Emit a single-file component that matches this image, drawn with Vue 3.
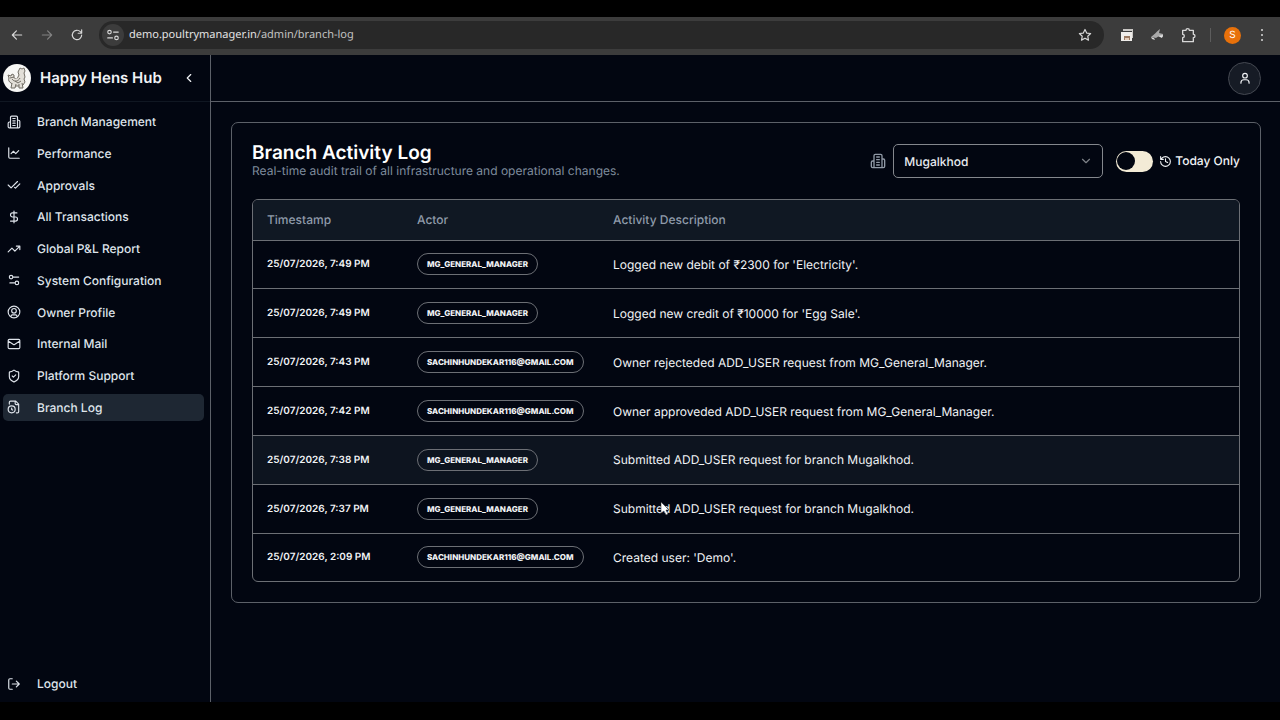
<script setup>
import { ref } from 'vue'

const nav = [
  { label: 'Branch Management', icon: 'building' },
  { label: 'Performance', icon: 'chart' },
  { label: 'Approvals', icon: 'checks' },
  { label: 'All Transactions', icon: 'dollar' },
  { label: 'Global P&L Report', icon: 'trend' },
  { label: 'System Configuration', icon: 'settings' },
  { label: 'Owner Profile', icon: 'user' },
  { label: 'Internal Mail', icon: 'mail' },
  { label: 'Platform Support', icon: 'shield' },
  { label: 'Branch Log', icon: 'log', active: true },
]

const icons = {
  building: 'M6 22V4a2 2 0 0 1 2-2h8a2 2 0 0 1 2 2v18Z M6 12H4a2 2 0 0 0-2 2v6a2 2 0 0 0 2 2h2 M18 9h2a2 2 0 0 1 2 2v9a2 2 0 0 1-2 2h-2 M10 6h4 M10 10h4 M10 14h4 M10 18h4',
  chart: 'M3 3v16a2 2 0 0 0 2 2h16 M7 13l4-4 4 4 5-5',
  checks: 'M18 6 7 17l-5-5 M22 10l-7.5 7.5L13 16',
  dollar: 'M12 2v20 M17 5H9.5a3.5 3.5 0 0 0 0 7h5a3.5 3.5 0 0 1 0 7H6',
  trend: 'M22 7l-8.5 8.5-5-5L2 17 M16 7h6v6',
  settings: 'M20 7h-9 M14 17H5 M20 17a3 3 0 1 1-6 0 3 3 0 0 1 6 0Z M10 7a3 3 0 1 1-6 0 3 3 0 0 1 6 0Z',
  user: 'M22 12a10 10 0 1 1-20 0 10 10 0 0 1 20 0Z M16 10a4 4 0 1 1-8 0 4 4 0 0 1 8 0Z M7 20.7V19a2 2 0 0 1 2-2h6a2 2 0 0 1 2 2v1.7',
  mail: 'M4 4h16a2 2 0 0 1 2 2v12a2 2 0 0 1-2 2H4a2 2 0 0 1-2-2V6a2 2 0 0 1 2-2Z M22 7l-9 5.7a2 2 0 0 1-2 0L2 7',
  shield: 'M20 13c0 5-3.5 7.5-7.7 9a1 1 0 0 1-.6 0C7.500 20.500 4 18 4 13V6a1 1 0 0 1 1-1c2 0 4.500-1.200 6.200-2.700a1.200 1.200 0 0 1 1.600 0C14.500 3.800 17 5 19 5a1 1 0 0 1 1 1Z M9 12l2 2 4-4',
  log: 'M16 22h2a2 2 0 0 0 2-2V7l-5-5H6a2 2 0 0 0-2 2v3 M14 2v4a2 2 0 0 0 2 2h4 M14 16a6 6 0 1 1-12 0 6 6 0 0 1 12 0Z M8 14v2.200l1.600 1',
  logout: 'M9 21H5a2 2 0 0 1-2-2V5a2 2 0 0 1 2-2h4 M16 17l5-5-5-5 M21 12H9',
  history: 'M3 12a9 9 0 1 0 9-9 9.750 9.750 0 0 0-6.740 2.740L3 8 M3 3v5h5 M12 7v5l4 2',
  chevronLeft: 'M15 18l-6-6 6-6',
  chevronDown: 'M6 9l6 6 6-6',
  person: 'M16 8a4 4 0 1 1-8 0 4 4 0 0 1 8 0Z M5 21v-1a5 5 0 0 1 5-5h4a5 5 0 0 1 5 5v1',
  back: 'M20 12H4 M11 5l-7 7 7 7',
  forward: 'M4 12h16 M13 5l7 7-7 7',
  reload: 'M20 12a8 8 0 1 1-2.300-5.700L20 8.500 M20 3v6h-6',
  star: 'M12 2.500l2.900 6.200 6.800.8-5 4.600 1.300 6.700-6-3.300-6 3.300 1.300-6.700-5-4.600 6.800-.8Z',
  puzzle: 'M4 5h5a2.500 2.500 0 0 1 5 0h6v6a2.500 2.500 0 0 1 0 5v6H4v-6a2.500 2.500 0 0 0 0-5Z',
}

const gm = 'MG_GENERAL_MANAGER'
const owner = 'SACHINHUNDEKAR116@GMAIL.COM'
const rows = [
  { time: '25/07/2026, 7:49 PM', actor: gm, text: "Logged new debit of ₹2300 for 'Electricity'." },
  { time: '25/07/2026, 7:49 PM', actor: gm, text: "Logged new credit of ₹10000 for 'Egg Sale'." },
  { time: '25/07/2026, 7:43 PM', actor: owner, text: 'Owner rejecteded ADD_USER request from MG_General_Manager.' },
  { time: '25/07/2026, 7:42 PM', actor: owner, text: 'Owner approveded ADD_USER request from MG_General_Manager.' },
  { time: '25/07/2026, 7:38 PM', actor: gm, text: 'Submitted ADD_USER request for branch Mugalkhod.', hovered: true },
  { time: '25/07/2026, 7:37 PM', actor: gm, text: 'Submitted ADD_USER request for branch Mugalkhod.' },
  { time: '25/07/2026, 2:09 PM', actor: owner, text: "Created user: 'Demo'." },
]

const branch = ref('Mugalkhod')
const todayOnly = ref(false)
</script>

<template>
  <div class="screen">
    <div class="browser">
      <button class="tool" aria-label="Back"><svg class="icon" viewBox="0 0 24 24"><path :d="icons.back" /></svg></button>
      <button class="tool dim" aria-label="Forward"><svg class="icon" viewBox="0 0 24 24"><path :d="icons.forward" /></svg></button>
      <button class="tool" aria-label="Reload"><svg class="icon" viewBox="0 0 24 24"><path :d="icons.reload" /></svg></button>
      <div class="address">
        <button class="site" aria-label="Site information">
          <svg class="icon" viewBox="0 0 24 24"><path d="M13 7h8 M3 17h8 M9 7a3 3 0 1 1-6 0 3 3 0 0 1 6 0Z M21 17a3 3 0 1 1-6 0 3 3 0 0 1 6 0Z" /></svg>
        </button>
        <a class="url" href="#">demo.poultrymanager.in<span>/admin/branch-log</span></a>
        <button class="tool" aria-label="Bookmark"><svg class="icon" viewBox="0 0 24 24"><path :d="icons.star" /></svg></button>
      </div>
      <div class="extensions">
        <button class="tool" aria-label="Tab windows">
          <svg viewBox="0 0 14 14" width="14" height="14">
            <path d="M3 1h10v9h-1V3H3Z" fill="#c9c7c4" />
            <path d="M1 4h11v9H1Z" fill="#efedea" />
            <path d="M4 12V8h6v4" fill="#9a7a62" />
            <path d="M5 12v-2h4v2" fill="#e8d0bd" />
          </svg>
        </button>
        <button class="tool" aria-label="Shark extension">
          <svg viewBox="0 0 14 14" width="14" height="14">
            <path d="M1 9c3-2 5-5 9-8l-1 4 4 1v3L9 8l-3 2Z" fill="#a9a9a9" />
            <path d="M1 9l3 1 1 2-3-1Z" fill="#d6d6d6" />
            <path d="M8 8l5-1-1 3Z" fill="#e2e2e2" />
          </svg>
        </button>
        <button class="tool" aria-label="Extensions"><svg class="icon puzzle" viewBox="0 0 24 24"><path :d="icons.puzzle" /></svg></button>
      </div>
      <span class="divider"></span>
      <button class="account" aria-label="Browser profile">S</button>
      <button class="tool" aria-label="Browser menu">
        <svg viewBox="0 0 14 14" width="14" height="14" fill="#d8d8d8"><circle cx="7" cy="2" r="1" /><circle cx="7" cy="7" r="1" /><circle cx="7" cy="12" r="1" /></svg>
      </button>
    </div>

    <div class="app">
      <aside class="sidebar">
        <div class="brand">
          <svg class="logo" viewBox="0 0 28 28">
            <circle cx="14" cy="14" r="14" fill="#f7f7f5" />
            <g fill="#e2dfd8" stroke="#716d65" stroke-width="1" stroke-linejoin="round">
              <path d="M8 19c-2-1-3-3-2-5l-1-3 3 1 1-2 2 1v3l3 1 2-4-1-3 1-2 1-2 2 1 2-1 1 3-1 2 1 4-1 2 1 3-2 3-2 1h-6Z" />
              <path d="M9 15c2 3 6 3 8-1M9 19l-1 5h4l1-4M16 20v4h4l-1-5M7 14l4-1M12 17l3 2 3-2" />
            </g>
          </svg>
          <strong>Happy Hens Hub</strong>
          <button class="collapse" aria-label="Collapse sidebar"><svg class="icon" viewBox="0 0 24 24"><path :d="icons.chevronLeft" /></svg></button>
        </div>
        <nav class="nav">
          <a v-for="item in nav" :key="item.label" href="#" class="link" :class="{ active: item.active }">
            <svg class="icon" viewBox="0 0 24 24"><path :d="icons[item.icon]" /></svg>{{ item.label }}
          </a>
        </nav>
        <button class="link logout"><svg class="icon" viewBox="0 0 24 24"><path :d="icons.logout" /></svg>Logout</button>
      </aside>

      <div class="page">
        <header class="topbar">
          <button class="avatar" aria-label="Account"><svg class="icon" viewBox="0 0 24 24"><path :d="icons.person" /></svg></button>
        </header>
        <main class="card">
          <div class="cardHead">
            <div>
              <h1>Branch Activity Log</h1>
              <p>Real-time audit trail of all infrastructure and operational changes.</p>
            </div>
            <div class="filters">
              <svg class="icon buildingIcon" viewBox="0 0 24 24"><path :d="icons.building" /></svg>
              <div class="selectBox">
                <select v-model="branch" aria-label="Branch"><option>Mugalkhod</option></select>
                <svg class="icon" viewBox="0 0 24 24"><path :d="icons.chevronDown" /></svg>
              </div>
              <input id="today" v-model="todayOnly" class="switch" type="checkbox" role="switch" />
              <label for="today"><svg class="icon history" viewBox="0 0 24 24"><path :d="icons.history" /></svg>Today Only</label>
            </div>
          </div>
          <div class="tableBox">
            <table>
              <thead>
                <tr><th class="colTime">Timestamp</th><th class="colActor">Actor</th><th>Activity Description</th></tr>
              </thead>
              <tbody>
                <tr v-for="(row, i) in rows" :key="i" :class="{ hovered: row.hovered }">
                  <td class="time">{{ row.time }}</td>
                  <td><span class="badge">{{ row.actor }}</span></td>
                  <td>{{ row.text }}</td>
                </tr>
              </tbody>
            </table>
          </div>
        </main>
      </div>
    </div>
    <svg class="cursor" viewBox="0 0 10 14"><path d="M1 0v11l3-2 2 4 2-1-2-4h3Z" fill="#fff" stroke="#222" stroke-width="0.500" /></svg>
  </div>
</template>

<style>
body { background: #000; }
</style>

<style scoped>
.screen {
  box-sizing: border-box;
  position: relative;
  min-height: 100vh;
  padding: 17px 0 18px;
  display: flex;
  flex-direction: column;
  background: #000;
  color: #f1f3f6;
  font-family: Inter, "Liberation Sans", sans-serif;
  font-size: 12px;
  text-rendering: geometricPrecision;
}
.screen *, .screen *::before { box-sizing: border-box; }
button { padding: 0; border: 0; background: none; color: inherit; font: inherit; text-rendering: inherit; }
a { color: inherit; text-decoration: none; }
.icon {
  width: 14px;
  height: 14px;
  flex: none;
  fill: none;
  stroke: currentColor;
  stroke-width: 2;
  stroke-linecap: round;
  stroke-linejoin: round;
}

.browser {
  display: flex;
  align-items: center;
  height: 38px;
  padding: 0 11px 2px 10px;
  background: #3c3c3c;
  color: #d8d8d8;
}
.tool { display: grid; place-items: center; width: 14px; height: 20px; margin-right: 16px; }
.dim { color: #828282; }
.address {
  display: flex;
  flex: 1;
  align-items: center;
  height: 28px;
  margin-left: -1px;
  padding-left: 3px;
  border-radius: 14px;
  background: #282828;
}
.address .tool { margin-right: 12px; }
.site { display: grid; place-items: center; width: 22px; height: 22px; border-radius: 11px; background: #3c3c3c; }
.url { flex: 1; margin-left: 5px; font: 11px/20px "Noto Sans", "Open Sans", sans-serif; color: #e3e3e3; }
.url span { color: #c2c2c2; }
.extensions { display: flex; margin-left: 16px; }
.puzzle { width: 16px; height: 16px; }
.divider { width: 1px; height: 14px; margin-right: 13px; background: #5d5d5d; }
.account { width: 17px; height: 17px; margin-right: 14px; border-radius: 9px; background: #e8710a; color: #fff; font-size: 10px; line-height: 17px; }
.browser > .tool:last-child { margin-right: 0; }

.app { flex: 1; display: flex; background: #020611; }
.sidebar { display: flex; flex-direction: column; width: 211px; flex: none; border-right: 1px solid #5c6068; }
.brand { display: flex; align-items: center; height: 47px; padding: 0 14px 0 3px; border-bottom: 1px solid #101722; }
.brand strong { flex: 1; margin-left: 9px; font-size: 15px; font-weight: 600; line-height: 24px; white-space: nowrap; }
.logo { width: 28px; height: 28px; flex: none; }
.collapse { display: flex; }
.nav { display: flex; flex-direction: column; justify-content: space-between; min-height: 313px; margin-top: 6px; padding: 0 6px 0 3px; }
.link {
  display: flex;
  align-items: center;
  gap: 16px;
  padding: 0 4px;
  border-radius: 5px;
  font-size: 12px;
  font-weight: 500;
  line-height: 27px;
  color: #dfe4eb;
}
.active { background: #1e2733; }
.logout { margin: auto 6px 5px 3px; }

.page { flex: 1; min-width: 0; }
.topbar { display: flex; align-items: center; justify-content: flex-end; height: 47px; padding-right: 19px; border-bottom: 1px solid #5c6068; }
.avatar { display: grid; place-items: center; width: 33px; height: 33px; border: 1px solid #444851; border-radius: 17px; background: #161b25; }
.card { margin: 20px 19px 0 20px; padding: 20px; border: 1px solid #5c6068; border-radius: 7px; }
.cardHead { display: flex; align-items: center; justify-content: space-between; height: 36px; }
h1 { margin: 0; font-size: 19px; font-weight: 600; line-height: 20px; color: #fff; }
p { margin: 0; font-size: 12px; line-height: 16px; color: #7f8c9d; }
.filters { display: flex; align-items: center; }
.buildingIcon { width: 16px; height: 16px; margin-right: 7px; color: #9099a6; }
.selectBox { position: relative; width: 210px; margin-right: 13px; }
select {
  appearance: none;
  display: block;
  width: 100%;
  height: 34px;
  padding: 0 10px;
  border: 1px solid #84878d;
  border-radius: 5px;
  background: #020611;
  color: #e8ebf0;
  font: 500 12px Inter, sans-serif;
  text-rendering: inherit;
}
.selectBox .icon { position: absolute; top: 10px; right: 10px; color: #7d8087; pointer-events: none; }
.switch {
  appearance: none;
  display: flex;
  align-items: center;
  width: 37px;
  height: 21px;
  margin: 0 6px 0 0;
  padding: 1px;
  border-radius: 11px;
  background: #f3ebd6;
}
.switch::before { content: ""; width: 18px; height: 18px; border-radius: 9px; background: #020611; }
.switch:checked { justify-content: flex-end; }
.history { width: 13px; height: 13px; }
label { display: flex; align-items: center; gap: 3px; font-weight: 500; line-height: 20px; white-space: nowrap; }

.tableBox { margin-top: 20px; border: 1px solid #6c6f75; border-radius: 6px; overflow: hidden; }
table { width: 100%; height: 381px; border-collapse: collapse; }
th, td { padding: 0 14px; text-align: left; }
th { height: 40px; font-weight: 500; color: #8f9baa; }
thead tr { background: #101823; }
tbody tr { border-top: 1px solid #6c6f75; }
.colTime { width: 150px; }
.colActor { width: 196px; }
td { white-space: nowrap; }
.time { font-size: 10px; font-weight: 600; }
.hovered { background: #0d141f; }
.badge {
  display: inline-block;
  padding: 0 9px;
  border: 1px solid #6c6f75;
  border-radius: 11px;
  font-size: 8px;
  font-weight: 800;
  line-height: 20px;
  vertical-align: middle;
}
.cursor { position: absolute; left: 660px; top: 502px; width: 10px; height: 14px; }
</style>
